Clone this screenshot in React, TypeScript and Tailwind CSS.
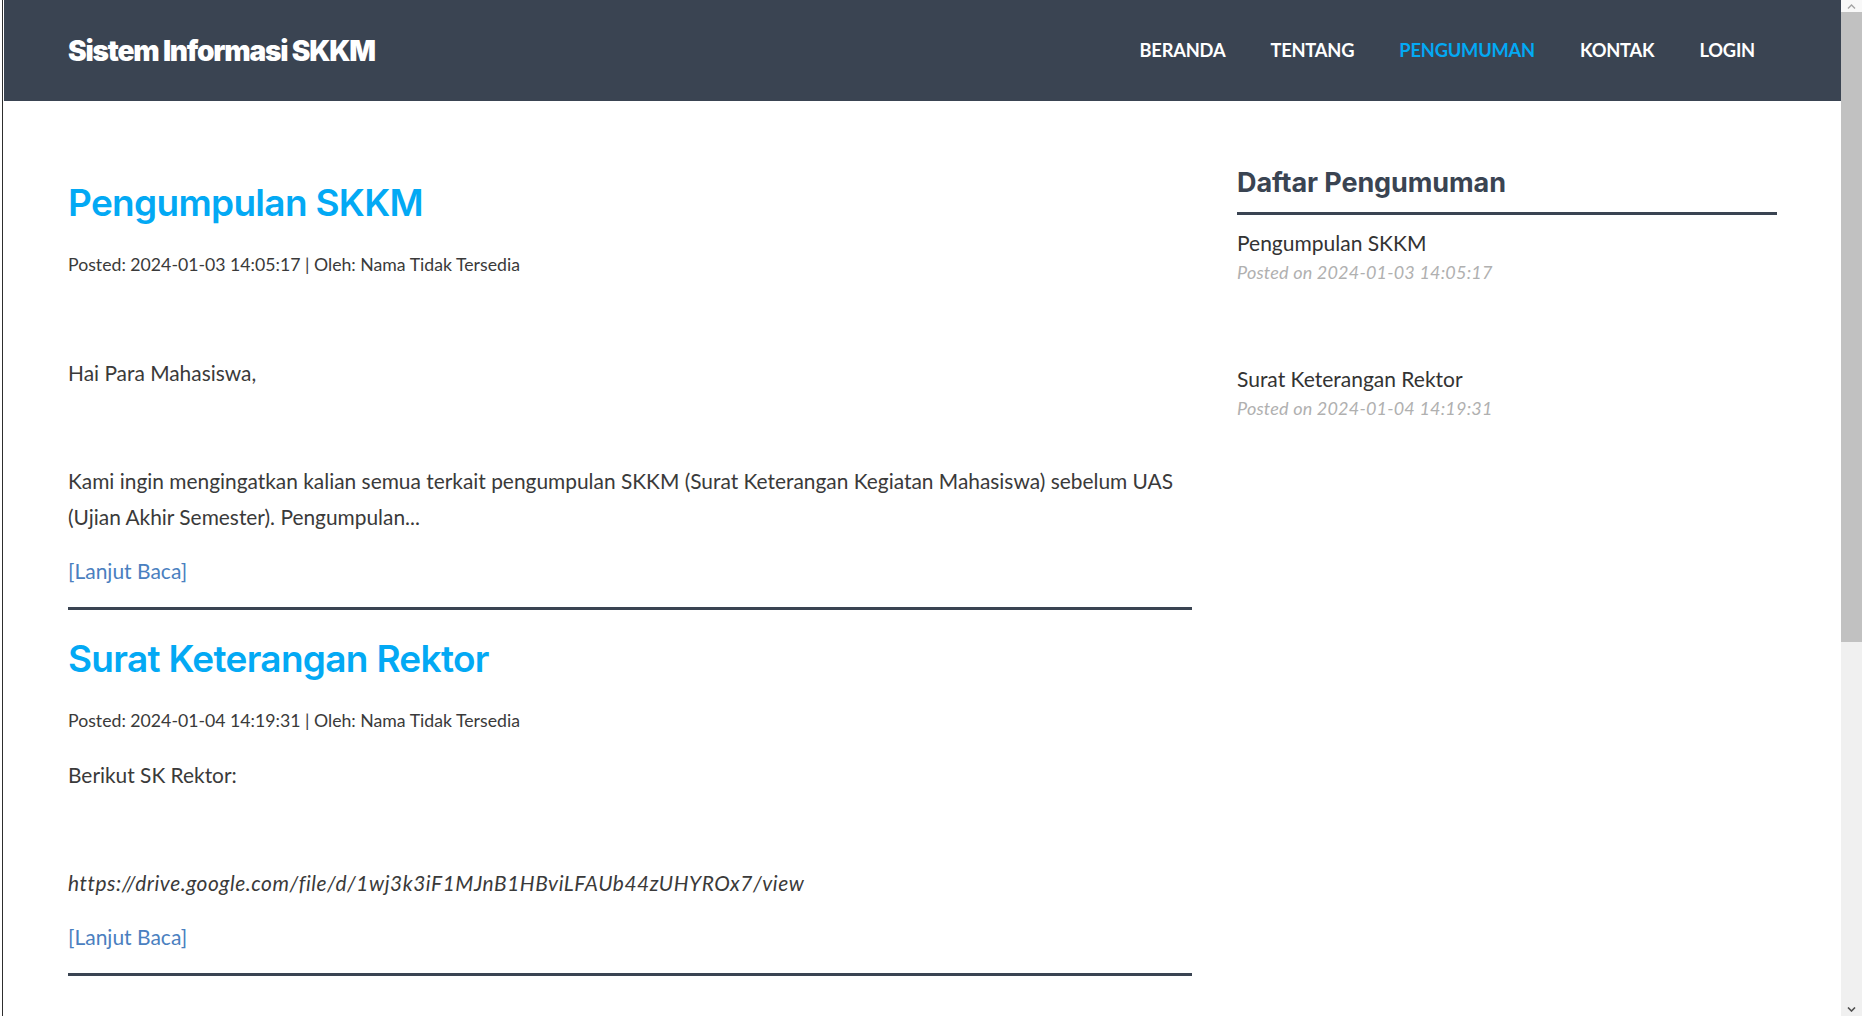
import React from 'react';

const navItems = ['BERANDA', 'TENTANG', 'PENGUMUMAN', 'KONTAK', 'LOGIN'];

const sidebarItems = [
    { title: 'Pengumpulan SKKM', date: '2024-01-03 14:05:17' },
    { title: 'Surat Keterangan Rektor', date: '2024-01-04 14:19:31' },
];

function Header() {
    return (
        <header className="h-[101px] shrink-0 bg-[#3a4452] flex items-center justify-between pl-[64px] pr-[86px]">
            <div className="font-['Inter',sans-serif] font-black text-[28px] tracking-[-1.2px] text-white leading-none">
                Sistem Informasi SKKM
            </div>
            <nav className="flex items-center gap-[45px]">
                {navItems.map((item) => (
                    <a
                        key={item}
                        href="#"
                        className={`font-['Lato',sans-serif] font-bold text-[18.3px] tracking-[-0.2px] leading-none ${
                            item === 'PENGUMUMAN' ? 'text-[#03a9f4]' : 'text-white'
                        }`}
                    >
                        {item}
                    </a>
                ))}
            </nav>
        </header>
    );
}

function Post({ title, date, children }: { title: string; date: string; children: React.ReactNode }) {
    return (
        <article>
            <h2 className="font-['Inter',sans-serif] font-semibold text-[37px] leading-[48px] text-[#03a9f4] mb-[20px] tracking-[-0.7px]">
                {title}
            </h2>
            <p className="text-[17.7px] leading-[36px] mb-[18px]">Posted: {date} | Oleh: Nama Tidak Tersedia</p>
            {children}
            <a href="#" className="block text-[21px] leading-[36px] text-[#4a80c0]">
                [Lanjut Baca]
            </a>
            <hr className="border-0 h-[3px] bg-[#3a4452] mt-[18px] mb-[25px]" />
        </article>
    );
}

function Para({ children }: { children?: React.ReactNode }) {
    return <p className="text-[20.9px] leading-[36px] mb-[18px]">{children ?? '\u00a0'}</p>;
}

function Sidebar() {
    return (
        <aside className="w-[540px] pt-[66px]">
            <h3 className="font-['Inter',sans-serif] font-bold text-[27px] leading-[32px] tracking-[-0.1px] text-[#3a4452] pb-[13px] border-b-[3px] border-[#3a4452]">
                Daftar Pengumuman
            </h3>
            <ul className="mt-[14px] flex flex-col gap-[80px]">
                {sidebarItems.map((item) => (
                    <li key={item.title}>
                        <div className="text-[21px] leading-[28px] text-[#333]">{item.title}</div>
                        <div className="mt-[2px] text-[18px] leading-[26px] tracking-[0.2px] italic text-[#b0b0b0]">
                            Posted on {item.date}
                        </div>
                    </li>
                ))}
            </ul>
        </aside>
    );
}

function Scrollbar() {
    return (
        <div className="w-[21px] shrink-0 bg-[#f0f0f0] flex flex-col items-center">
            <div className="h-[12px] w-full flex items-center justify-center bg-[#f8f8f8]">
                <svg width="9" height="5" viewBox="0 0 9 5">
                    <path d="M1 4.5 4.5 1 8 4.5" fill="none" stroke="#a3a3a3" strokeWidth="1.4" />
                </svg>
            </div>
            <div className="w-full h-[630px] bg-[#c1c1c1]" />
            <div className="flex-1" />
            <div className="h-[14px] w-full flex items-center justify-center">
                <svg width="9" height="5" viewBox="0 0 9 5">
                    <path d="M1 0.5 4.5 4 8 0.5" fill="none" stroke="#505050" strokeWidth="1.6" />
                </svg>
            </div>
        </div>
    );
}

export default function App() {
    return (
        <div className="flex h-[1016px] overflow-hidden bg-white font-['Lato',sans-serif] text-[#3a3a3a]">
            <div className="w-[2px] shrink-0 bg-white" />
            <div className="w-[1px] shrink-0 bg-[#2e2e2e]" />
            <div className="w-[1px] shrink-0 bg-white" />
            <div className="flex-1 min-w-0 flex flex-col">
                <Header />
                <main className="flex pl-[64px] gap-[45px]">
                    <section className="w-[1124px] pt-[78px]">
                        <Post title="Pengumpulan SKKM" date="2024-01-03 14:05:17">
                            <Para />
                            <Para>Hai Para Mahasiswa,</Para>
                            <Para />
                            <Para>
                                Kami ingin mengingatkan kalian semua terkait pengumpulan SKKM (Surat Keterangan Kegiatan
                                Mahasiswa) sebelum UAS (Ujian Akhir Semester). Pengumpulan...
                            </Para>
                        </Post>
                        <Post title="Surat Keterangan Rektor" date="2024-01-04 14:19:31">
                            <Para>Berikut SK Rektor:</Para>
                            <Para />
                            <Para>
                                <em className="tracking-[0.55px]">
                                    https://drive.google.com/file/d/1wj3k3iF1MJnB1HBviLFAUb44zUHYROx7/view
                                </em>
                            </Para>
                        </Post>
                    </section>
                    <Sidebar />
                </main>
            </div>
            <Scrollbar />
        </div>
    );
}
